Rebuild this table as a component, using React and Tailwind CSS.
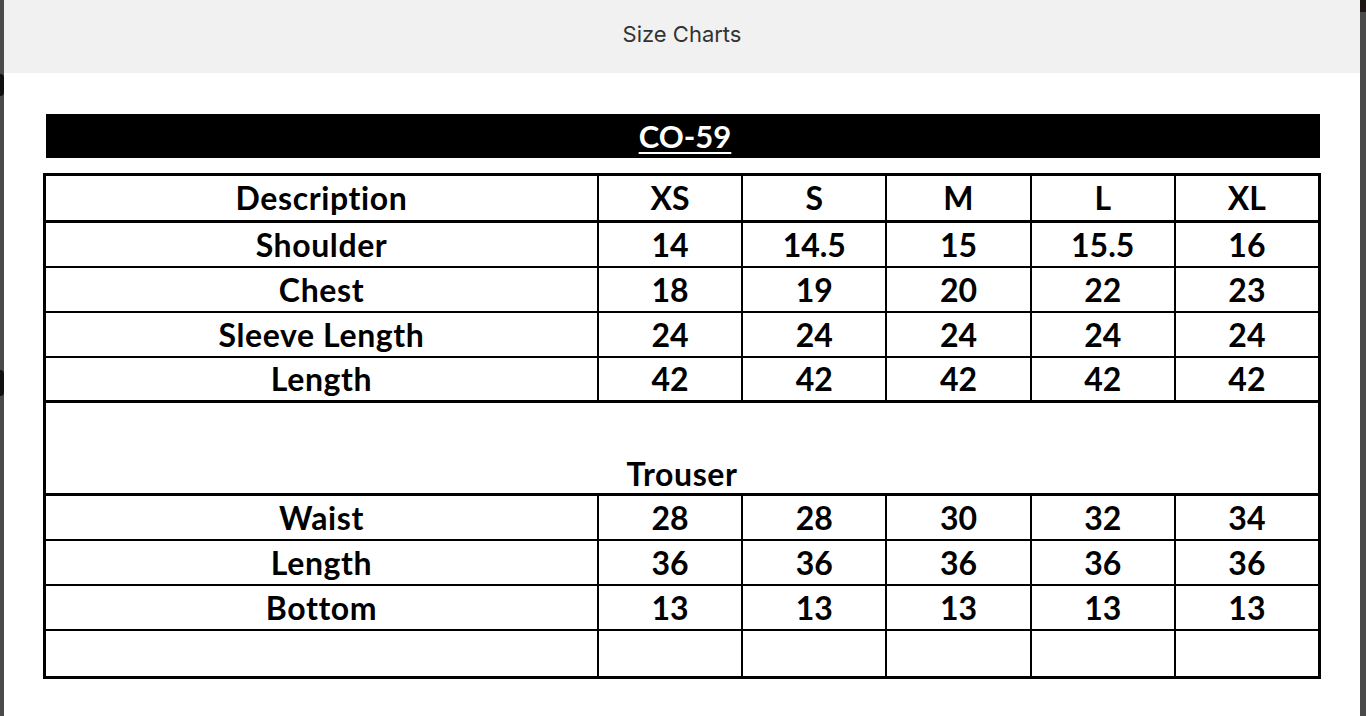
const sizes = ['XS', 'S', 'M', 'L', 'XL']

const topRows = [
  { label: 'Shoulder', values: ['14', '14.5', '15', '15.5', '16'] },
  { label: 'Chest', values: ['18', '19', '20', '22', '23'] },
  { label: 'Sleeve Length', values: ['24', '24', '24', '24', '24'] },
  { label: 'Length', values: ['42', '42', '42', '42', '42'] },
]

const trouserRows = [
  { label: 'Waist', values: ['28', '28', '30', '32', '34'] },
  { label: 'Length', values: ['36', '36', '36', '36', '36'] },
  { label: 'Bottom', values: ['13', '13', '13', '13', '13'] },
  { label: '', values: ['', '', '', '', ''] },
]

// One row of the chart: label column + five size columns
function ChartRow({ label, values, border }) {
  return (
    <div className={`grid grid-cols-[551px_repeat(5,1fr)] h-[45px] ${border}`}>
      <div className="flex items-center justify-center tracking-[0.6px]">{label}</div>
      {values.map((v, i) => (
        <div key={i} className="flex items-center justify-center border-l-2 border-black">
          {v}
        </div>
      ))}
    </div>
  )
}

export default function App() {
  return (
    <div className="h-[716px] w-full flex bg-[#4a4a4a] overflow-hidden">
      {/* left strip, page behind the overlay */}
      <div className="w-[4px] flex flex-col relative">
        <div className="absolute left-0 top-[74px] w-[4px] h-[22px] rounded-r-full bg-[#111]" />
        <div className="absolute left-0 top-[370px] w-[4px] h-[26px] rounded-r-full bg-[#111]" />
      </div>

      {/* modal */}
      <div className="w-[1356px] flex flex-col bg-white">
        <div className="h-[73px] flex items-center justify-center bg-[#f1f1f1] pb-[4px]">
          <span className="text-[22px] text-[#333] font-['Inter',sans-serif]">Size Charts</span>
        </div>

        <div className="flex flex-col pt-[41px] font-['Lato','Carlito',sans-serif] font-bold text-black">
          <div className="ml-[42px] w-[1274px] h-[44px] bg-black flex items-center justify-center pl-[4px]">
            <span className="text-white text-[31px] underline underline-offset-[4px] decoration-[2px] leading-none">
              CO-59
            </span>
          </div>

          <div className="ml-[39px] mt-[15px] w-[1278px] border-[3px] border-black text-[32px] leading-none">
            <ChartRow label="Description" values={sizes} border="h-[47px] border-b-[3px] border-black" />
            {topRows.map((r, i) => (
              <ChartRow
                key={r.label}
                label={r.label}
                values={r.values}
                border={i < topRows.length - 1 ? 'border-b-2 border-black' : 'border-b-[3px] border-black h-[45px]'}
              />
            ))}

            <div className="h-[93px] flex items-end justify-center pb-[3px] border-b-[3px] border-black tracking-[0.6px]">
              Trouser
            </div>

            {trouserRows.map((r, i) => (
              <ChartRow
                key={i}
                label={r.label}
                values={r.values}
                border={i < trouserRows.length - 1 ? 'border-b-2 border-black' : 'h-[43px]'}
              />
            ))}
          </div>
        </div>
      </div>

      {/* right strip */}
      <div className="w-[6px] flex flex-col">
        <div className="h-[12px] bg-[#1c1714]" />
      </div>
    </div>
  )
}
